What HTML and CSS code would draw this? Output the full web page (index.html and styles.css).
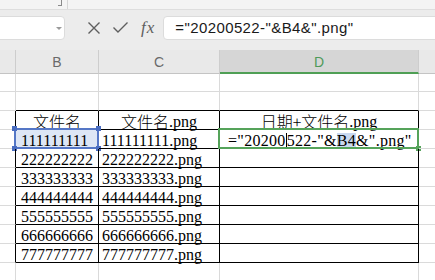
FILE: index.html
```html
<!DOCTYPE html>
<html lang="zh">
<head>
    <meta charset="UTF-8">
    <title>Sheet</title>
    <link rel="stylesheet" href="styles.css">
</head>
<body>
    <div class="ribbon">
        <span class="hook"></span>
        <span class="sep"></span>
    </div>

    <div class="formula-bar">
        <div class="name-box"><span class="caret"></span></div>
        <svg class="icon-x" width="12" height="12" viewBox="0 0 12 12">
            <path d="M0.5 0.5 L11.5 11.5 M11.5 0.5 L0.5 11.5" />
        </svg>
        <svg class="icon-ok" width="15" height="11" viewBox="0 0 15 11">
            <path d="M0.5 5.5 L5 10 L14.5 0.5" />
        </svg>
        <span class="fx">fx</span>
        <div class="formula-input">="20200522-"&amp;B4&amp;".png"</div>
    </div>

    <div class="sheet">
        <!-- column headers -->
        <div class="hd"></div>
        <div class="hd">B</div>
        <div class="hd">C</div>
        <div class="hd hd-active">D</div>
        <div class="hd hd-last"></div>

        <!-- row above -->
        <div class="c"></div><div class="c"></div><div class="c"></div><div class="c"></div><div class="c e"></div>
        <div class="c"></div><div class="c tt"></div><div class="c tt"></div><div class="c tt"></div><div class="c e"></div>

        <!-- table head -->
        <div class="c ta"></div>
        <div class="c t mid"><span class="cn">文件名</span></div>
        <div class="c t mid"><span class="cn">文件名</span>.png</div>
        <div class="c t mid"><span class="cn">日期+文件名</span>.png</div>
        <div class="c e"></div>

        <!-- row 4: selected + editing -->
        <div class="c ta"></div>
        <div class="c t num selected">111111111<span class="sel-box"><i class="h1"></i><i class="h2"></i><i class="h3"></i><i class="h4"></i></span></div>
        <div class="c t name">111111111.png</div>
        <div class="c t edit">="2020<span class="cursor">0</span>522-"&amp;<span class="ref">B4</span>&amp;".png"<span class="act-box"><i></i></span></div>
        <div class="c e"></div>

        <div class="c ta"></div><div class="c t num">222222222</div><div class="c t name">222222222.png</div><div class="c t"></div><div class="c e"></div>
        <div class="c ta"></div><div class="c t num">333333333</div><div class="c t name">333333333.png</div><div class="c t"></div><div class="c e"></div>
        <div class="c ta"></div><div class="c t num">444444444</div><div class="c t name">444444444.png</div><div class="c t"></div><div class="c e"></div>
        <div class="c ta"></div><div class="c t num">555555555</div><div class="c t name">555555555.png</div><div class="c t"></div><div class="c e"></div>
        <div class="c ta"></div><div class="c t num">666666666</div><div class="c t name">666666666.png</div><div class="c t"></div><div class="c e"></div>
        <div class="c ta"></div><div class="c t num">777777777</div><div class="c t name">777777777.png</div><div class="c t"></div><div class="c e"></div>

        <div class="c"></div><div class="c"></div><div class="c"></div><div class="c"></div><div class="c e"></div>
    </div>
</body>
</html>
```

FILE: styles.css
```css
* {
    box-sizing: border-box;
}

body {
    margin: 0;
    width: 435px;
    height: 280px;
    overflow: hidden;
    background: #fff;
    font-family: "Liberation Sans", sans-serif;
}

/* strip of ribbon left at the top */
.ribbon {
    height: 10px;
    background: #f4f4f4;
    border-bottom: 1px solid #dedede;
    display: flex;
    align-items: flex-start;
}

.ribbon .hook {
    margin-left: 58px;
    width: 4px;
    height: 6px;
    border-right: 1px solid #8a8a8a;
    border-bottom: 1px solid #8a8a8a;
}

.ribbon .sep {
    margin-left: 5px;
    width: 1px;
    height: 9px;
    background: #d6d6d6;
}

/* formula bar */
.formula-bar {
    height: 40px;
    background: #ececec;
    display: flex;
    align-items: center;
    padding-bottom: 5px;
}

.name-box {
    margin-left: -5px;
    width: 70px;
    height: 24px;
    background: #fff;
    border: 1px solid #dcdcdc;
    border-radius: 4px;
    position: relative;
}

.name-box .caret {
    position: absolute;
    right: 2px;
    top: 10px;
    border-left: 3px solid transparent;
    border-right: 3px solid transparent;
    border-top: 3px solid #9a9a9a;
}

.icon-x {
    margin-left: 23px;
}

.icon-x path,
.icon-ok path {
    fill: none;
    stroke: #5e5e5e;
    stroke-width: 1.4;
}

.icon-ok {
    margin-left: 13px;
}

.fx {
    margin-left: 13px;
    font-family: "Liberation Serif", serif;
    font-style: italic;
    font-size: 17px;
    color: #5e5e5e;
    letter-spacing: 1px;
}

.formula-input {
    margin-left: 8px;
    margin-right: -5px;
    flex: 1;
    height: 24px;
    background: #fff;
    border: 1px solid #dcdcdc;
    border-radius: 4px;
    padding-left: 11px;
    font-size: 15px;
    line-height: 22px;
    color: #1a1a1a;
    letter-spacing: 0.4px;
    white-space: nowrap;
}

/* sheet grid */
.sheet {
    display: grid;
    grid-template-columns: 16px 83px 121px 199px 1fr;
    grid-template-rows: 24px 18px repeat(10, 19px);
    font-family: "Liberation Serif", "Noto Sans CJK SC", serif;
    font-size: 16px;
    color: #000;
}

.hd {
    background: #e9e9e9;
    border-right: 1px solid #cdcdcd;
    border-bottom: 1px solid #c4c4c4;
    font-family: "Liberation Sans", sans-serif;
    font-size: 14px;
    color: #6a6a6a;
    display: flex;
    align-items: center;
    justify-content: center;
    padding-top: 1px;
}

.hd-active {
    background: #d6d6d6;
    color: #4f9a5a;
    border-bottom: 2px solid #4f9f55;
}

.hd-last {
    border-right: none;
}

.c {
    border-right: 1px solid #dadada;
    border-bottom: 1px solid #dadada;
    display: flex;
    align-items: flex-end;
    line-height: 15px;
    white-space: nowrap;
    position: relative;
}

.c.e {
    border-right: none;
}

.c.tt {
    border-bottom-color: #000;
}

.c.ta {
    border-right-color: #000;
}

.c.t {
    border-right-color: #000;
    border-bottom-color: #000;
}

.mid {
    justify-content: center;
}

.cn {
    font-family: "Noto Sans CJK SC", sans-serif;
    font-weight: 300;
    line-height: 15px;
}

.num {
    padding-left: 5px;
}

.name {
    padding-left: 3px;
}

.edit {
    padding-left: 8px;
    letter-spacing: 0.3px;
}

.ref {
    background: #c9d8f0;
}

.cursor {
    border-right: 1px solid #000;
}

/* selected cell B4 */
.selected {
    background: #dde6f5;
}

.sel-box,
.act-box {
    position: absolute;
    left: -2px;
    top: -2px;
    right: -1px;
    bottom: -1px;
    border: 2px solid #5577c6;
}

.sel-box i,
.act-box i {
    position: absolute;
    width: 5px;
    height: 5px;
    background: #4a6dc0;
}

.sel-box .h1 { left: -4px; top: -4px; }
.sel-box .h2 { right: -4px; top: -4px; }
.sel-box .h3 { left: -4px; bottom: -4px; }
.sel-box .h4 { right: -4px; bottom: -4px; }

/* active editing cell D4 */
.act-box {
    border-color: #55a35a;
}

.act-box i {
    right: -4px;
    bottom: -4px;
    background: #55a35a;
}
```
